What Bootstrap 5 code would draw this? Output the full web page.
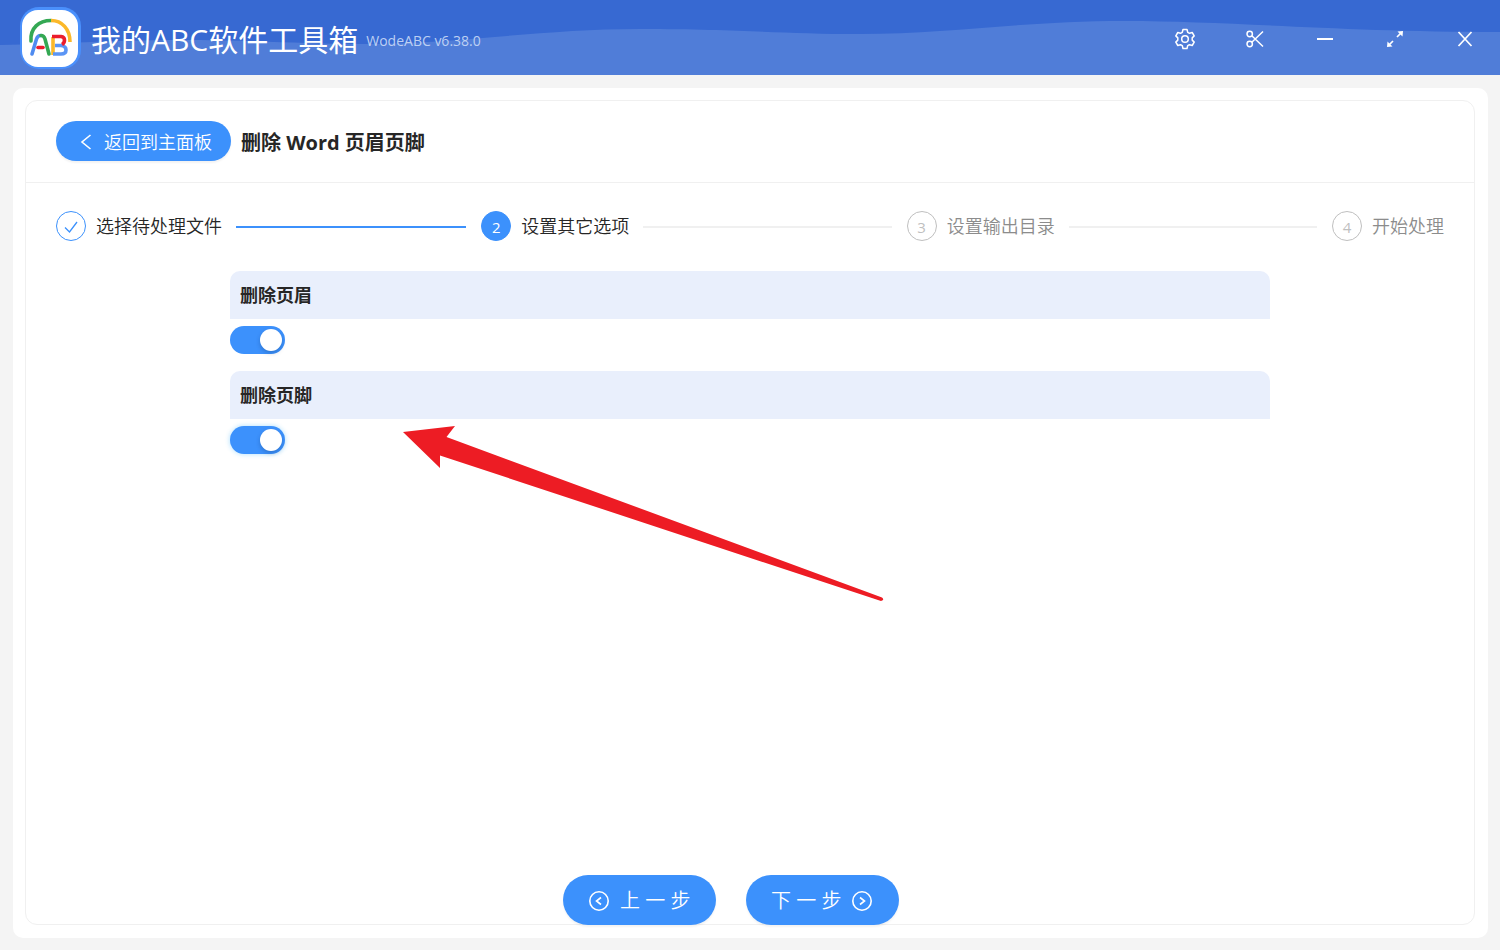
<!DOCTYPE html>
<html lang="zh-CN">
<head>
<meta charset="utf-8">
<meta name="viewport" content="width=device-width, initial-scale=1">
<title>我的ABC软件工具箱</title>
<link href="https://cdn.jsdelivr.net/npm/bootstrap@5.3.0/dist/css/bootstrap.min.css" rel="stylesheet">
<style>
  :root { --brand: #3c91fc; --line: #f0f0f0; }
  body { background: #f4f4f4; color: #262626; font-family: "Open Sans", "Noto Sans CJK SC", sans-serif; font-size: 18px; line-height: 28px; }
  .app-header { background: #3769d2; min-height: 75px; padding: 0 15px 0 20px; color: #fff; }
  .wave { inset: 0; width: 100%; height: 100%; }
  .app-title { gap: 8px; padding: 4px 0 0 10px; }
  .app-name { font-size: 30px; line-height: 40px; font-weight: 400; }
  .app-version { font-size: 14px; line-height: 20px; padding-top: 3px; color: #bdd0f3; }
  .win-nav { gap: 30px; }
  .win-btn { width: 40px; height: 40px; color: #fff; }
  .win-btn:hover { color: #dfe9ff; }
  .shell { margin: 13px 12px 12px 13px; padding: 12px 13px 13px 12px; background: #fff; border-radius: 10px; }
  .panel { border: 1px solid var(--line); border-radius: 12px; }
  .panel-head { gap: 10px; padding: 20px 30px 21px; border-bottom: 1px solid var(--line); }
  .panel-main { padding: 28px 30px 0; }
  .panel-title { font-size: 20px; line-height: 30px; font-weight: 700; padding-top: 4px; }
  .btn-brand { --bs-btn-color: #fff; --bs-btn-bg: var(--brand); --bs-btn-border-width: 0; --bs-btn-hover-color: #fff; --bs-btn-hover-bg: #5aa4ff; --bs-btn-active-color: #fff; --bs-btn-active-bg: #2c7de6; box-shadow: 0 2px 2px rgba(0,0,0,.05); font-weight: 350; }
  .btn-back { height: 40px; padding: 2px 19px 0 20px; font-size: 18px; gap: 8px; }
  .btn-step { height: 50px; min-width: 153px; padding: 2px 25px 0; font-size: 20px; gap: 10px; }
  .step { gap: 10px; font-weight: 350; }
  .step-grow { flex: 1 1 0; }
  .step-dot { width: 30px; height: 30px; border: 1px solid #bfbfbf; font-size: 15px; font-weight: 400; color: #bfbfbf; padding-top: 2px; }
  .step-wait { color: #8c8c8c; }
  .step-done .step-dot { border-color: var(--brand); color: var(--brand); }
  .step-now .step-dot { border-color: var(--brand); background: var(--brand); color: #fff; }
  .step-line { height: 2px; background: var(--line); margin: 2px 15px 0 4px; }
  .step-done .step-line { background: var(--brand); }
  .options { max-width: 1040px; margin-top: 30px; }
  .option-title { padding: 10px; background: #e9effc; border-radius: 10px 10px 0 0; font-weight: 700; }
  .option-row { padding: 7px 0 17px; min-height: 0; }
  .form-switch .toggle { width: 55px; height: 28px; margin: 0; border: 0; border-radius: 14px; background: #bfbfbf; box-shadow: none; position: relative; }
  .form-switch .toggle::after { content: ""; position: absolute; top: 3px; left: 3px; width: 22px; height: 22px; border-radius: 50%; background: #fff; box-shadow: 0 2px 4px rgba(0,35,80,.25); transition: left .2s; }
  .form-switch .toggle:checked { background: var(--brand); }
  .form-switch .toggle:checked::after { left: 30px; }
  .form-switch .toggle-lit { box-shadow: 0 0 4px 1px rgba(60,180,252,.3); }
  .actions { gap: 30px; padding-right: 38px; margin-bottom: -1px; }
  .pointer { left: 403px; top: 426px; }
</style>
</head>
<body class="min-vh-100 d-flex flex-column position-relative">
<header class="app-header position-relative d-flex align-items-center justify-content-between">
  <svg class="wave position-absolute" viewBox="0 0 1500 75" preserveAspectRatio="none" aria-hidden="true">
    <path fill="#507dd8" d="M0 45C60 44 110 40 180 40S300 44 360 44C460 44 540 29 640 29S780 34 860 34C950 34 1020 21 1125 21S1340 32 1500 32V75H0Z"/>
  </svg>
  <div class="position-relative d-flex align-items-center">
    <svg width="61" height="64" viewBox="0 0 61 64" role="img" aria-label="ABC">
      <rect x="0" y="1" width="61" height="62" rx="19" fill="#4a90fc"/>
      <rect x="2" y="4" width="56" height="57" rx="16" fill="#fff"/>
      <g fill="none" stroke-width="3.6" stroke-linecap="round">
        <path stroke="#34a853" d="M11 35C10 22 19 14.500 31 14.500"/>
        <path stroke="#fbb829" stroke-linecap="butt" d="M31 14.500C42 14.500 50 23 50 36"/>
        <path stroke="#4f8bf0" d="M12 48L16.500 33Q17.500 29.500 21 29.500"/>
        <path stroke="#34a853" d="M21 29.500Q24 29.500 25 33L29 48"/>
        <path stroke="#ea1c2c" d="M18 41.500H23"/>
        <path stroke="#fbb829" stroke-linecap="butt" d="M33 31V49"/>
        <path stroke="#5b95f5" stroke-linecap="butt" d="M35 39.500H41Q46 40 46 44T41 48H33"/>
        <path stroke="#ea1c2c" stroke-linecap="butt" d="M32 30.500H41Q44.500 31 44.500 34T42 38.500"/>
      </g>
    </svg>
    <div class="app-title d-flex align-items-center">
      <span class="app-name">我的ABC软件工具箱</span>
      <span class="app-version">WodeABC v6.38.0</span>
    </div>
  </div>
  <nav class="win-nav position-relative d-flex" aria-label="窗口">
    <button type="button" class="btn win-btn p-0 border-0" aria-label="设置"><svg width="22" height="22" viewBox="0 0 22 22" fill="none" stroke="currentColor" stroke-width="1.5" stroke-linejoin="round"><path d="M9 1.500H13L13.700 4.300L15.500 5.300L18.200 4.500L20.200 7.900L18.200 9.900V12.100L20.200 14.100L18.200 17.500L15.500 16.700L13.700 17.700L13 20.500H9L8.300 17.700L6.500 16.700L3.800 17.500L1.800 14.100L3.800 12.100V9.900L1.800 7.900L3.800 4.500L6.500 5.300L8.300 4.300Z"/><circle cx="11" cy="11" r="3.300"/></svg></button>
    <button type="button" class="btn win-btn p-0 border-0" aria-label="截图"><svg width="20" height="20" viewBox="0 0 20 20" fill="none" stroke="currentColor" stroke-width="1.500"><circle cx="4.700" cy="5" r="2.700"/><circle cx="4.700" cy="15" r="2.700"/><path d="M6.800 6.700L18 17.500M6.800 13.300L18 2.500"/></svg></button>
    <button type="button" class="btn win-btn p-0 border-0" aria-label="最小化"><svg width="20" height="20" viewBox="0 0 20 20"><path d="M2 9H18V11H2Z" fill="currentColor"/></svg></button>
    <button type="button" class="btn win-btn p-0 border-0" aria-label="最大化"><svg width="20" height="20" viewBox="0 0 20 20"><path d="M12 8L16 4M8 12L4 16" stroke="currentColor" stroke-width="1.700"/><path d="M12.500 2.500L18 2L17.500 7.500ZM2 18L2.500 12.500L7.500 17.500Z" fill="currentColor"/></svg></button>
    <button type="button" class="btn win-btn p-0 border-0" aria-label="关闭"><svg width="20" height="20" viewBox="0 0 20 20"><path d="M3.500 3L16.500 17M16.500 3L3.500 17" stroke="currentColor" stroke-width="1.700"/></svg></button>
  </nav>
</header>
<main class="shell flex-grow-1 d-flex flex-column">
  <section class="panel flex-grow-1 d-flex flex-column">
    <div class="panel-head d-flex align-items-center">
      <button type="button" class="btn btn-brand btn-back rounded-pill d-flex align-items-center"><svg width="20" height="20" viewBox="0 0 20 20" fill="none" stroke="currentColor" stroke-width="1.600"><path d="M14.500 3L6 10L14.500 17"/></svg>返回到主面板</button>
      <h1 class="panel-title mb-0">删除 Word 页眉页脚</h1>
    </div>
    <div class="panel-main flex-grow-1 d-flex flex-column">
      <ol class="list-unstyled d-flex mb-0">
        <li class="step step-grow step-done d-flex align-items-center"><span class="step-dot rounded-circle d-flex align-items-center justify-content-center"><svg width="16" height="16" viewBox="0 0 16 16" fill="none" stroke="currentColor" stroke-width="1.300"><path d="M2 8.500L6.500 13L14 3"/></svg></span><span>选择待处理文件</span><span class="step-line flex-grow-1"></span></li>
        <li class="step step-grow step-now d-flex align-items-center" aria-current="step"><span class="step-dot rounded-circle d-flex align-items-center justify-content-center">2</span><span>设置其它选项</span><span class="step-line flex-grow-1"></span></li>
        <li class="step step-grow step-wait d-flex align-items-center"><span class="step-dot rounded-circle d-flex align-items-center justify-content-center">3</span><span>设置输出目录</span><span class="step-line flex-grow-1"></span></li>
        <li class="step step-wait d-flex align-items-center"><span class="step-dot rounded-circle d-flex align-items-center justify-content-center">4</span><span>开始处理</span></li>
      </ol>
      <form class="options w-100 mx-auto">
        <label class="option-title d-block" for="delHeader">删除页眉</label>
        <div class="option-row form-check form-switch mb-0 d-flex"><input class="form-check-input toggle" type="checkbox" role="switch" id="delHeader" checked></div>
        <label class="option-title d-block" for="delFooter">删除页脚</label>
        <div class="option-row form-check form-switch mb-0 d-flex"><input class="form-check-input toggle toggle-lit" type="checkbox" role="switch" id="delFooter" checked></div>
      </form>
      <div class="actions d-flex justify-content-center mt-auto">
        <button type="button" class="btn btn-brand btn-step rounded-pill d-flex align-items-center"><svg width="22" height="22" viewBox="0 0 22 22" fill="none" stroke="currentColor" stroke-width="1.600"><circle cx="11" cy="11" r="9.200"/><path d="M13 7.500L8.500 11L13 14.500"/></svg>上 一 步</button>
        <button type="button" class="btn btn-brand btn-step rounded-pill d-flex align-items-center">下 一 步<svg width="22" height="22" viewBox="0 0 22 22" fill="none" stroke="currentColor" stroke-width="1.600"><circle cx="11" cy="11" r="9.200"/><path d="M9 7.500L13.500 11L9 14.500"/></svg></button>
      </div>
    </div>
  </section>
</main>
<svg class="pointer position-absolute pe-none" width="481" height="175" viewBox="0 0 481 175" aria-hidden="true"><path fill="#ed1c24" d="M0 6L52 0L43.500 11L479 171.500Q482 174 478 175L37 29.500V42Z"/></svg>
<script src="https://cdn.jsdelivr.net/npm/bootstrap@5.3.0/dist/js/bootstrap.bundle.min.js"></script>
</body>
</html>
